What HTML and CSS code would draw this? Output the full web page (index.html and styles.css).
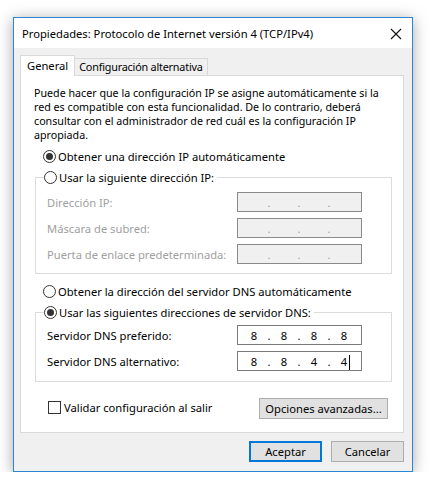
FILE: index.html
```html
<!DOCTYPE html>
<html lang="es">
<head>
<meta charset="UTF-8">
<title>Propiedades: Protocolo de Internet versión 4 (TCP/IPv4)</title>
<link rel="stylesheet" href="styles.css">
</head>
<body>

<div class="window">
    <div class="titlebar">
        <span class="title">Propiedades: Protocolo de Internet versión 4 (TCP/IPv4)</span>
        <svg class="close" width="12" height="12" viewBox="0 0 12 12">
            <path d="M1 1 L11 11 M11 1 L1 11" stroke="#111" stroke-width="1.1" fill="none"/>
        </svg>
    </div>
    <div class="client">
        <div class="tabs">
            <div class="tab active">General</div>
            <div class="tab">Configuración alternativa</div>
        </div>
        <div class="panel">
            <p class="intro">Puede hacer que la configuración IP se asigne automáticamente si la<br>red es compatible con esta funcionalidad. De lo contrario, deberá<br>consultar con el administrador de red cuál es la configuración IP<br>apropiada.</p>

            <label class="radio-line first"><span class="radio checked"></span>Obtener una dirección IP automáticamente</label>

            <fieldset class="group ip-group">
                <legend><span class="radio"></span>Usar la siguiente dirección IP:</legend>
                <div class="row disabled">
                    <span>Dirección IP:</span>
                    <div class="ipbox"><span class="seg"></span><span class="dot">.</span><span class="seg"></span><span class="dot">.</span><span class="seg"></span><span class="dot">.</span><span class="seg"></span></div>
                </div>
                <div class="row disabled">
                    <span>Máscara de subred:</span>
                    <div class="ipbox"><span class="seg"></span><span class="dot">.</span><span class="seg"></span><span class="dot">.</span><span class="seg"></span><span class="dot">.</span><span class="seg"></span></div>
                </div>
                <div class="row disabled">
                    <span>Puerta de enlace predeterminada:</span>
                    <div class="ipbox"><span class="seg"></span><span class="dot">.</span><span class="seg"></span><span class="dot">.</span><span class="seg"></span><span class="dot">.</span><span class="seg"></span></div>
                </div>
            </fieldset>

            <label class="radio-line dns-auto"><span class="radio"></span>Obtener la dirección del servidor DNS automáticamente</label>

            <fieldset class="group dns-group">
                <legend><span class="radio checked"></span>Usar las siguientes direcciones de servidor DNS:</legend>
                <div class="row">
                    <span>Servidor DNS preferido:</span>
                    <div class="ipbox"><span class="seg">8</span><span class="dot">.</span><span class="seg">8</span><span class="dot">.</span><span class="seg">8</span><span class="dot">.</span><span class="seg">8</span></div>
                </div>
                <div class="row">
                    <span>Servidor DNS alternativo:</span>
                    <div class="ipbox"><span class="seg">8</span><span class="dot">.</span><span class="seg">8</span><span class="dot">.</span><span class="seg">4</span><span class="dot">.</span><span class="seg">4<i class="caret"></i></span></div>
                </div>
            </fieldset>

            <div class="panel-footer">
                <label class="check-line"><span class="checkbox"></span>Validar configuración al salir</label>
                <button class="btn advanced">Opciones avanzadas...</button>
            </div>
        </div>
        <div class="buttons">
            <button class="btn default">Aceptar</button>
            <button class="btn">Cancelar</button>
        </div>
    </div>
</div>

</body>
</html>
```

FILE: styles.css
```css
body {
    margin: 0;
    background: #fff;
    font-family: "Noto Sans", "Liberation Sans", sans-serif;
    font-size: 11.2px;
    color: #000;
}
.window {
    margin: 17px 0 0 13px;
    width: 398px;
    height: 453px;
    border: 1px solid #2b85d3;
    box-shadow: 0 2px 14px rgba(0, 0, 0, 0.35);
    display: flex;
    flex-direction: column;
}
.titlebar {
    height: 30px;
    background: #fff;
    display: flex;
    align-items: center;
    justify-content: space-between;
    padding: 0 10px 0 8px;
}
.title {
    font-size: 11.2px;
}
.close {
    margin-top: 1px;
}
.client {
    flex: 1;
    background: #f0f0f0;
    padding: 7px 8px 0 6px;
}
.tabs {
    display: flex;
    align-items: flex-end;
    height: 20px;
    padding-left: 1px;
}
.tab {
    height: 16px;
    line-height: 15px;
    padding: 0 4px;
    border: 1px solid #d9d9d9;
    border-bottom: none;
    background: #f0f0f0;
    margin-left: -1px;
    font-size: 10.8px;
    letter-spacing: -0.2px;
}
.tab.active {
    height: 20px;
    line-height: 19px;
    background: #fff;
    position: relative;
    z-index: 1;
    margin-bottom: -1px;
    padding: 0 6px;
    font-size: 11.2px;
    letter-spacing: 0;
}
.panel {
    height: 356px;
    background: #fff;
    border: 1px solid #d9d9d9;
    padding: 0 11px 0 13px;
}
.intro {
    margin: 10px 0 0;
    line-height: 14px;
    font-size: 10.7px;
    white-space: nowrap;
}
.radio-line, .check-line {
    display: flex;
    align-items: center;
}
.radio-line.first {
    margin: 7px 0 0 9px;
}
.radio {
    display: inline-block;
    width: 11px;
    height: 11px;
    border: 1px solid #333;
    border-radius: 50%;
    margin-right: 2px;
    box-sizing: content-box;
    position: relative;
}
.radio.checked::after {
    content: "";
    position: absolute;
    left: 2px;
    top: 2px;
    width: 7px;
    height: 7px;
    border-radius: 50%;
    background: #333;
}
.group {
    margin: 6px 0 0 1px;
    width: 357px;
    padding: 0 0 6px;
    border: 1px solid #dcdcdc;
    box-sizing: border-box;
}
.group legend {
    margin-left: 8px;
    padding: 0 3px 0 0;
    display: flex;
    align-items: center;
}
.row {
    display: flex;
    align-items: center;
    justify-content: space-between;
    padding: 0 29px 0 11px;
    height: 26px;
}
.ip-group .row:first-of-type {
    margin-top: 4px;
}
.dns-group .row:first-of-type {
    margin-top: 2px;
}
.row.disabled {
    color: #a0a0a0;
}
.ipbox {
    width: 119px;
    height: 18px;
    border: 1px solid #7a7a7a;
    background: #fff;
    display: flex;
    align-items: center;
    padding-left: 4px;
    box-sizing: content-box;
}
.row.disabled .ipbox {
    background: #f0f0f0;
    border-color: #8a8a8a;
}
.seg {
    width: 24px;
    text-align: center;
    position: relative;
}
.dot {
    width: 6px;
    text-align: center;
}
.caret {
    position: absolute;
    top: 1px;
    right: 6px;
    width: 1px;
    height: 15px;
    background: #000;
}
.radio-line.dns-auto {
    margin: 10px 0 0 9px;
}
.dns-group {
    margin-top: 6px;
    padding-bottom: 7px;
}
.panel-footer {
    display: flex;
    justify-content: space-between;
    align-items: flex-start;
    margin: 16px 0 0 14px;
    width: 340px;
}
.check-line {
    margin-top: 2px;
}
.checkbox {
    display: inline-block;
    width: 11px;
    height: 11px;
    border: 1px solid #333;
    margin-right: 3px;
}
.btn {
    font-family: inherit;
    font-size: 11.2px;
    height: 21px;
    background: #e1e1e1;
    border: 1px solid #adadad;
    padding: 0;
    color: #000;
}
.advanced {
    width: 129px;
}
.buttons {
    display: flex;
    justify-content: flex-end;
    gap: 9px;
    margin-top: 8px;
}
.buttons .btn {
    width: 73px;
}
.btn.default {
    border: 2px solid #0078d7;
}
```
